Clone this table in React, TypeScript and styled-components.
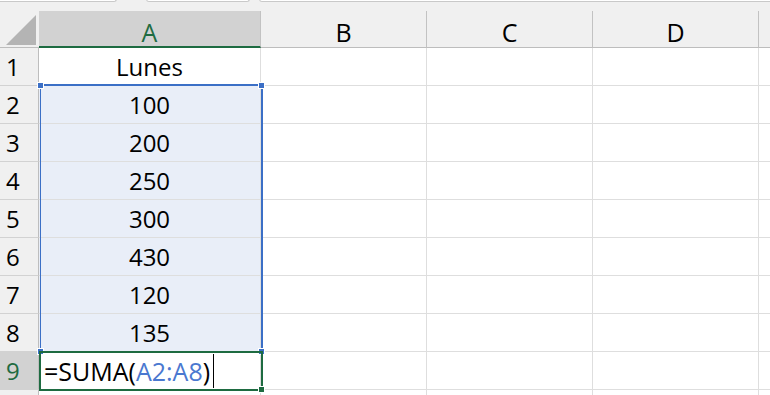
import styled, { createGlobalStyle } from "styled-components";

const COLS = ["A", "B", "C", "D", ""];
const COL_WIDTHS = [222, 166, 166, 166, 166];
const ROW_HEAD_W = 39;
const HEAD_H = 37;
const ROW_H = 38;

const values: Record<number, string> = {
  1: "Lunes",
  2: "100",
  3: "200",
  4: "250",
  5: "300",
  6: "430",
  7: "120",
  8: "135",
};

// row 10 is only a sliver at the bottom edge, so it carries no label
const ROWS = [1, 2, 3, 4, 5, 6, 7, 8, 9, 10];
const ACTIVE_ROW = 9;

export default function App() {
  return (
    <>
      <GlobalStyle />
      <Page>
        <TabStrip>
          <Tab $width={121} $left={-4} />
          <Tab $width={104} $left={29} />
          <Tab $width={520} $left={9} />
        </TabStrip>
        <Sheet>
          <Corner>
            <svg width="39" height="37" viewBox="0 0 39 37">
              <polygon points="6,34 36,34 36,4" fill="#b4b4b4" />
            </svg>
          </Corner>
          {COLS.map((c, i) => (
            <ColHeader key={i} $active={i === 0}>
              {c}
            </ColHeader>
          ))}
          {ROWS.map((r) => (
            <Row key={r} r={r} />
          ))}

          <RangeBox style={{ top: HEAD_H + ROW_H - 2, height: ROW_H * 7 + 1 }}>
            <Handle $c="#3b6fc6" $x="left" $y="top" />
            <Handle $c="#3b6fc6" $x="right" $y="top" />
            <Handle $c="#3b6fc6" $x="left" $y="bottom" />
            <Handle $c="#3b6fc6" $x="right" $y="bottom" />
          </RangeBox>
          <ActiveBox style={{ top: HEAD_H + ROW_H * (ACTIVE_ROW - 1) - 1 }}>
            <Handle $c="#1e6b41" $x="right" $y="bottom" />
          </ActiveBox>
        </Sheet>
      </Page>
    </>
  );
}

function Row({ r }: { r: number }) {
  const active = r === ACTIVE_ROW;
  return (
    <>
      <RowHeader $active={active}>{r < 10 ? r : ""}</RowHeader>
      {COLS.map((c, i) => {
        const inRange = i === 0 && r >= 2 && r <= 8;
        if (i === 0 && active) {
          return (
            <Cell key={i} $align="left">
              <Formula>
                =SUMA(<Ref>A2:A8</Ref>)<Caret />
              </Formula>
            </Cell>
          );
        }
        return (
          <Cell key={i} $fill={inRange}>
            {i === 0 ? values[r] : ""}
          </Cell>
        );
      })}
    </>
  );
}

const GlobalStyle = createGlobalStyle`
  html, body {
    margin: 0;
    padding: 0;
    background: #ffffff;
    overflow: hidden;
  }
  body {
    font-family: "Open Sans", "Noto Sans", sans-serif;
  }
`;

const Page = styled.div`
  width: 770px;
  height: 395px;
  overflow: hidden;
  background: #ffffff;
`;

const TabStrip = styled.div`
  height: 11px;
  background: #f0f0f0;
  display: flex;
  align-items: flex-start;
  overflow: hidden;
`;

const Tab = styled.div<{ $width: number; $left: number }>`
  flex: none;
  width: ${(p) => p.$width}px;
  margin-left: ${(p) => p.$left}px;
  height: 3px;
  margin-top: -1px;
  box-sizing: border-box;
  background: #ffffff;
  border: 1px solid #c9c9c9;
  border-top: none;
  border-radius: 0 0 5px 5px;
`;

const Sheet = styled.div`
  position: relative;
  display: grid;
  grid-template-columns: ${ROW_HEAD_W}px ${COL_WIDTHS.map((w) => `${w}px`).join(" ")};
  grid-template-rows: ${HEAD_H}px repeat(${ROWS.length}, ${ROW_H}px);
  background: #f0f0f0;
`;

const Corner = styled.div`
  background: #f0f0f0;
  border-bottom: 1px solid #bdbdbd;
  box-sizing: border-box;
  svg {
    display: block;
  }
`;

const ColHeader = styled.div<{ $active?: boolean }>`
  box-sizing: border-box;
  display: flex;
  align-items: center;
  justify-content: center;
  padding-top: 6px;
  font-size: 25px;
  color: ${(p) => (p.$active ? "#1e6b41" : "#000000")};
  background: ${(p) => (p.$active ? "#d2d2d2" : "#f0f0f0")};
  border-right: 1px solid #c2c2c2;
  border-bottom: ${(p) => (p.$active ? "2px solid #1e6b41" : "1px solid #bdbdbd")};
`;

const RowHeader = styled.div<{ $active?: boolean }>`
  box-sizing: border-box;
  display: flex;
  align-items: center;
  padding-left: 6px;
  font-size: 24px;
  color: ${(p) => (p.$active ? "#1e6b41" : "#000000")};
  background: ${(p) => (p.$active ? "#d2d2d2" : "#f0f0f0")};
  border-right: 1px solid #bdbdbd;
  border-bottom: 1px solid #d2d2d2;
`;

const Cell = styled.div<{ $fill?: boolean; $align?: "left" | "center" }>`
  box-sizing: border-box;
  display: flex;
  align-items: center;
  justify-content: ${(p) => (p.$align === "left" ? "flex-start" : "center")};
  padding: 0 ${(p) => (p.$align === "left" ? "5px" : "0")};
  font-size: 24px;
  color: #000000;
  white-space: nowrap;
  background: ${(p) => (p.$fill ? "#e9eef8" : "#ffffff")};
  border-right: 1px solid #dedede;
  border-bottom: 1px solid #dedede;
`;

const Formula = styled.span`
  display: inline-flex;
  align-items: center;
  font-size: 25px;
`;

const Ref = styled.span`
  color: #4a78d0;
`;

const Caret = styled.span`
  display: inline-block;
  width: 1px;
  height: 34px;
  margin-left: 3px;
  background: #000000;
`;

const RangeBox = styled.div`
  position: absolute;
  left: ${ROW_HEAD_W + 1}px;
  width: ${COL_WIDTHS[0] + 1}px;
  box-sizing: border-box;
  border: 2px solid #3b6fc6;
  border-bottom: none;
  border-left: 1px solid #3b6fc6;
  pointer-events: none;
`;

const ActiveBox = styled.div`
  position: absolute;
  left: ${ROW_HEAD_W}px;
  width: ${COL_WIDTHS[0] + 2}px;
  height: ${ROW_H + 2}px;
  box-sizing: border-box;
  border: 2px solid #1e6b41;
  pointer-events: none;
`;

const Handle = styled.div<{ $c: string; $x: "left" | "right"; $y: "top" | "bottom" }>`
  position: absolute;
  width: 5px;
  height: 5px;
  background: ${(p) => p.$c};
  border: 1px solid #ffffff;
  ${(p) => (p.$x === "left" ? "left: -4px;" : "right: -4px;")}
  ${(p) => (p.$y === "top" ? "top: -4px;" : "bottom: -4px;")}
`;
